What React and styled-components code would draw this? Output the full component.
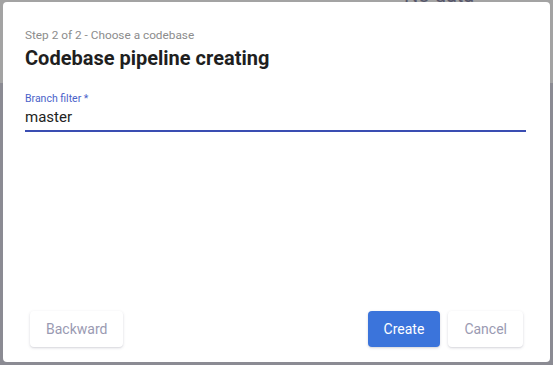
import React, { useState } from "react";
import styled, { createGlobalStyle } from "styled-components";

const GlobalStyle = createGlobalStyle`
  html, body {
    margin: 0;
    padding: 0;
    width: 553px;
    height: 365px;
    overflow: hidden;
  }
  body {
    font-family: Roboto, "Liberation Sans", sans-serif;
  }
`;

const Backdrop = styled.div`
  position: relative;
  width: 553px;
  height: 365px;
  box-sizing: border-box;
  padding: 2px 3px 3px 3px;
  background: linear-gradient(to bottom, #a3a3a3 0, #a3a3a3 83px, #8b8b93 83px, #8b8b93 100%);
`;

const PageText = styled.div`
  position: absolute;
  top: -15px;
  left: 404px;
  font-family: Roboto, "Liberation Sans", sans-serif;
  font-size: 20px;
  line-height: 20px;
  color: #56566a;
`;

const Dialog = styled.div`
  position: relative;
  width: 547px;
  height: 360px;
  background: #fff;
  border-radius: 4px;
  box-sizing: border-box;
  display: flex;
  flex-direction: column;
`;

const Content = styled.div`
  flex: 1;
  padding: 26px 24px 0 22px;
`;

const Step = styled.div`
  font-size: 11.8px;
  line-height: 14px;
  color: #8c8c8c;
`;

const Title = styled.h2`
  margin: 4px 0 0;
  font-size: 20px;
  line-height: 24px;
  font-weight: 700;
  color: #1f1f1f;
`;

const Field = styled.label`
  display: block;
  margin-top: 23px;
`;

const Label = styled.span`
  display: block;
  font-size: 10.5px;
  line-height: 12px;
  color: ${(p) => (p.$focused ? "#4a62c9" : "#888")};
`;

const Input = styled.input`
  display: block;
  width: 100%;
  box-sizing: border-box;
  margin-top: 1px;
  padding: 2px 0 4px;
  border: none;
  border-bottom: 2px solid #3a4db2;
  outline: none;
  font-family: Roboto, "Liberation Sans", sans-serif;
  font-size: 15px;
  line-height: 18px;
  color: #222;
  background: transparent;
`;

const Actions = styled.div`
  display: flex;
  align-items: center;
  gap: 8px;
  padding: 0 27px 15px 27px;
`;

const Spacer = styled.div`
  flex: 1;
`;

const Button = styled.button`
  height: 36px;
  padding: 0 ${(p) => p.$px || 16}px;
  border: none;
  border-radius: 4px;
  font-family: Roboto, "Liberation Sans", sans-serif;
  font-size: 14px;
  cursor: pointer;
  background: ${(p) => (p.$primary ? "#3b74db" : "#fff")};
  color: ${(p) => (p.$primary ? "#fff" : "#9a9ab2")};
  box-shadow: 0 1px 3px rgba(60, 60, 90, 0.18), 0 1px 1px rgba(60, 60, 90, 0.06);
`;

export default function App() {
  const [branch, setBranch] = useState("master");
  return (
    <>
      <GlobalStyle />
      <Backdrop>
        <PageText>No data</PageText>
        <Dialog>
          <Content>
            <Step>Step 2 of 2 - Choose a codebase</Step>
            <Title>Codebase pipeline creating</Title>
            <Field>
              <Label $focused>Branch filter *</Label>
              <Input value={branch} onChange={(e) => setBranch(e.target.value)} />
            </Field>
          </Content>
          <Actions>
            <Button $px={16}>Backward</Button>
            <Spacer />
            <Button $primary $px={16}>Create</Button>
            <Button $px={16}>Cancel</Button>
          </Actions>
        </Dialog>
      </Backdrop>
    </>
  );
}
